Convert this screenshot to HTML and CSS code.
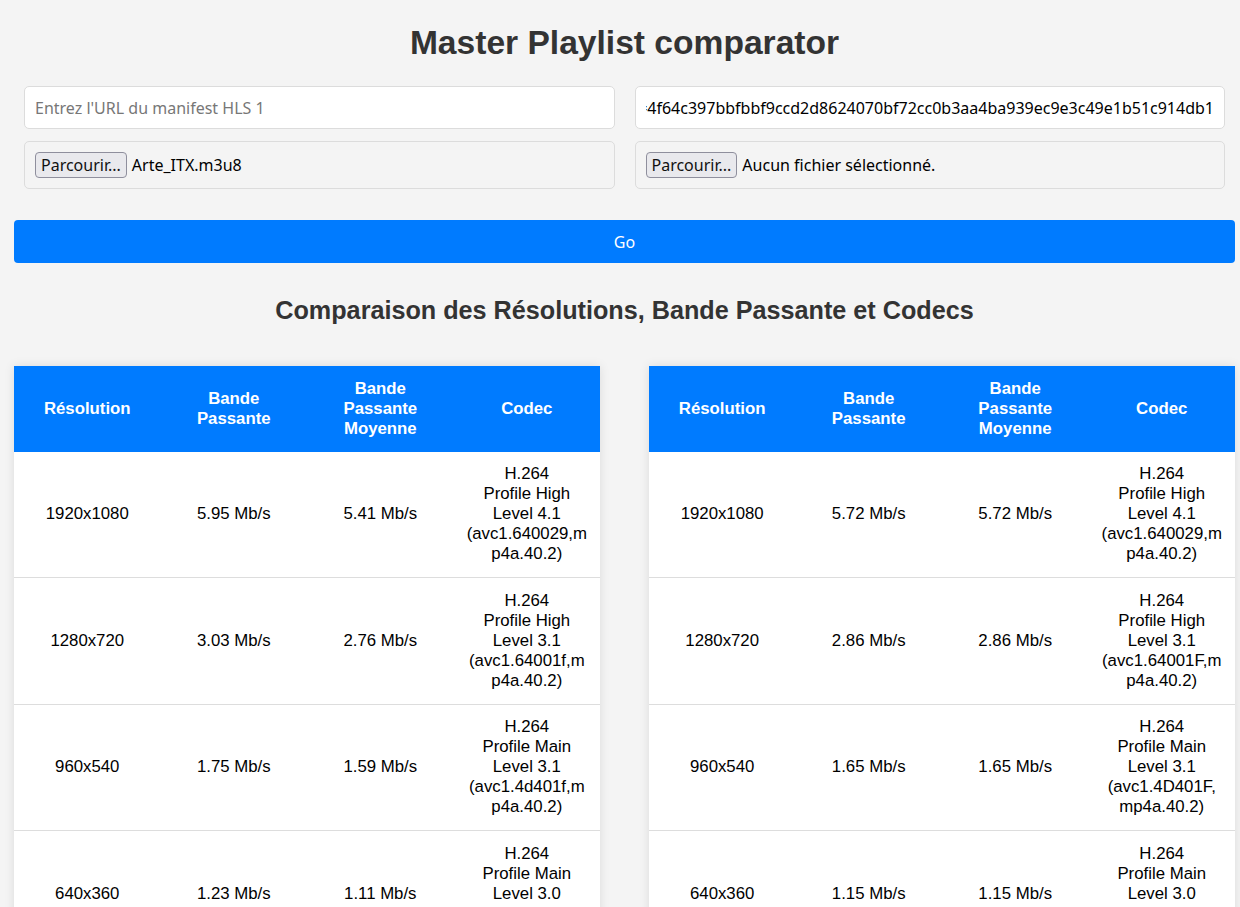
FILE: index.html
```html
<!DOCTYPE html>
<html lang="fr">
<head>
<meta charset="utf-8">
<title>Master Playlist comparator</title>
<link rel="stylesheet" href="styles.css">
</head>
<body>
<div class="page">
  <h1 class="title">Master Playlist comparator</h1>

  <div class="sources">
    <div class="source">
      <input class="url-input" type="text" placeholder="Entrez l'URL du manifest HLS 1">
      <div class="file-box">
        <span class="file-btn">Parcourir...</span>
        <span class="file-name">Arte_ITX.m3u8</span>
      </div>
    </div>
    <div class="source">
      <div class="url-input url-filled"><div class="url-clip"><span class="url-text">https://manifest.example/master.m3u8?hdnts=exp=1714000000~acl=/*~hmac=4f64c397bbfbbf9ccd2d8624070bf72cc0b3aa4ba939ec9e3c49e1b51c914db1</span></div></div>
      <div class="file-box">
        <span class="file-btn">Parcourir...</span>
        <span class="file-name">Aucun fichier sélectionné.</span>
      </div>
    </div>
  </div>

  <button class="go-btn" type="button">Go</button>

  <h2 class="subtitle">Comparaison des Résolutions, Bande Passante et Codecs</h2>

  <div class="tables">
    <table class="cmp">
      <thead>
        <tr><th>Résolution</th><th>Bande Passante</th><th>Bande Passante Moyenne</th><th>Codec</th></tr>
      </thead>
      <tbody>
        <tr><td>1920x1080</td><td>5.95 Mb/s</td><td>5.41 Mb/s</td><td>H.264<br>Profile High<br>Level 4.1<br>(avc1.640029,mp4a.40.2)</td></tr>
        <tr><td>1280x720</td><td>3.03 Mb/s</td><td>2.76 Mb/s</td><td>H.264<br>Profile High<br>Level 3.1<br>(avc1.64001f,mp4a.40.2)</td></tr>
        <tr><td>960x540</td><td>1.75 Mb/s</td><td>1.59 Mb/s</td><td>H.264<br>Profile Main<br>Level 3.1<br>(avc1.4d401f,mp4a.40.2)</td></tr>
        <tr><td>640x360</td><td>1.23 Mb/s</td><td>1.11 Mb/s</td><td>H.264<br>Profile Main<br>Level 3.0<br>(avc1.4d401e,mp4a.40.2)</td></tr>
      </tbody>
    </table>
    <table class="cmp">
      <thead>
        <tr><th>Résolution</th><th>Bande Passante</th><th>Bande Passante Moyenne</th><th>Codec</th></tr>
      </thead>
      <tbody>
        <tr><td>1920x1080</td><td>5.72 Mb/s</td><td>5.72 Mb/s</td><td>H.264<br>Profile High<br>Level 4.1<br>(avc1.640029,mp4a.40.2)</td></tr>
        <tr><td>1280x720</td><td>2.86 Mb/s</td><td>2.86 Mb/s</td><td>H.264<br>Profile High<br>Level 3.1<br>(avc1.64001F,mp4a.40.2)</td></tr>
        <tr><td>960x540</td><td>1.65 Mb/s</td><td>1.65 Mb/s</td><td>H.264<br>Profile Main<br>Level 3.1<br>(avc1.4D401F,mp4a.40.2)</td></tr>
        <tr><td>640x360</td><td>1.15 Mb/s</td><td>1.15 Mb/s</td><td>H.264<br>Profile Main<br>Level 3.0<br>(avc1.4D401E,mp4a.40.2)</td></tr>
      </tbody>
    </table>
  </div>
</div>
</body>
</html>
```

FILE: styles.css
```css
html, body {
  margin: 0;
  padding: 0;
}

body {
  background: #f4f4f4;
  font-family: "Liberation Sans", Arial, sans-serif;
  color: #000;
}

.page {
  padding: 0 5px 0 14px;
}

.title {
  margin: 23px 0 13px;
  font-size: 33.6px;
  line-height: 40px;
  font-weight: bold;
  text-align: center;
  color: #333;
}

.sources {
  display: flex;
}

.source {
  flex: 1;
  padding: 10px;
  display: flex;
  flex-direction: column;
  gap: 12px;
  min-width: 0;
}

.url-input {
  box-sizing: border-box;
  width: 100%;
  height: 43px;
  padding: 0 10px;
  border: 1px solid #dcdcdc;
  border-radius: 5px;
  background: #fff;
  font-family: "Noto Sans", "Open Sans", sans-serif;
  font-size: 16px;
  color: #000;
  outline: none;
}

.url-input::placeholder {
  color: #777;
}

.url-filled {
  display: flex;
  align-items: center;
}

.url-clip {
  flex: 1;
  min-width: 0;
  overflow: hidden;
  display: flex;
  justify-content: flex-end;
  white-space: nowrap;
}

.url-text {
  flex: none;
}

.file-box {
  box-sizing: border-box;
  height: 48px;
  padding: 0 10px;
  border: 1px solid #dcdcdc;
  border-radius: 5px;
  display: flex;
  align-items: center;
  gap: 5px;
  font-family: "Noto Sans", "Open Sans", sans-serif;
  font-size: 16px;
  color: #000;
}

.file-btn {
  box-sizing: border-box;
  height: 26px;
  padding: 0 5px;
  border: 1px solid #8f8f9d;
  border-radius: 4px;
  background: #e9e9ed;
  display: flex;
  align-items: center;
  color: #111;
}

.go-btn {
  display: block;
  box-sizing: border-box;
  width: 100%;
  height: 43px;
  margin-top: 21px;
  border: none;
  border-radius: 4px;
  background: #007bff;
  color: #fff;
  font-family: "Noto Sans", "Open Sans", sans-serif;
  font-size: 16px;
  padding-top: 2px;
  cursor: pointer;
}

.subtitle {
  margin: 32px 0 41px;
  font-size: 25.2px;
  line-height: 30px;
  font-weight: bold;
  text-align: center;
  color: #333;
}

.tables {
  display: flex;
  justify-content: space-between;
  align-items: flex-start;
}

.cmp {
  width: 48%;
  border-collapse: collapse;
  table-layout: fixed;
  background: #fff;
  box-shadow: 0 0 10px rgba(0, 0, 0, 0.1);
  font-size: 16.8px;
  line-height: 20px;
}

.cmp th {
  background: #007bff;
  color: #fff;
  font-weight: bold;
  padding: 12.75px 12px;
  text-align: center;
  vertical-align: middle;
}

.cmp td {
  padding: 12.75px 13px;
  border-bottom: 1px solid #ddd;
  text-align: center;
  vertical-align: middle;
  word-break: break-all;
  color: #000;
}
```
